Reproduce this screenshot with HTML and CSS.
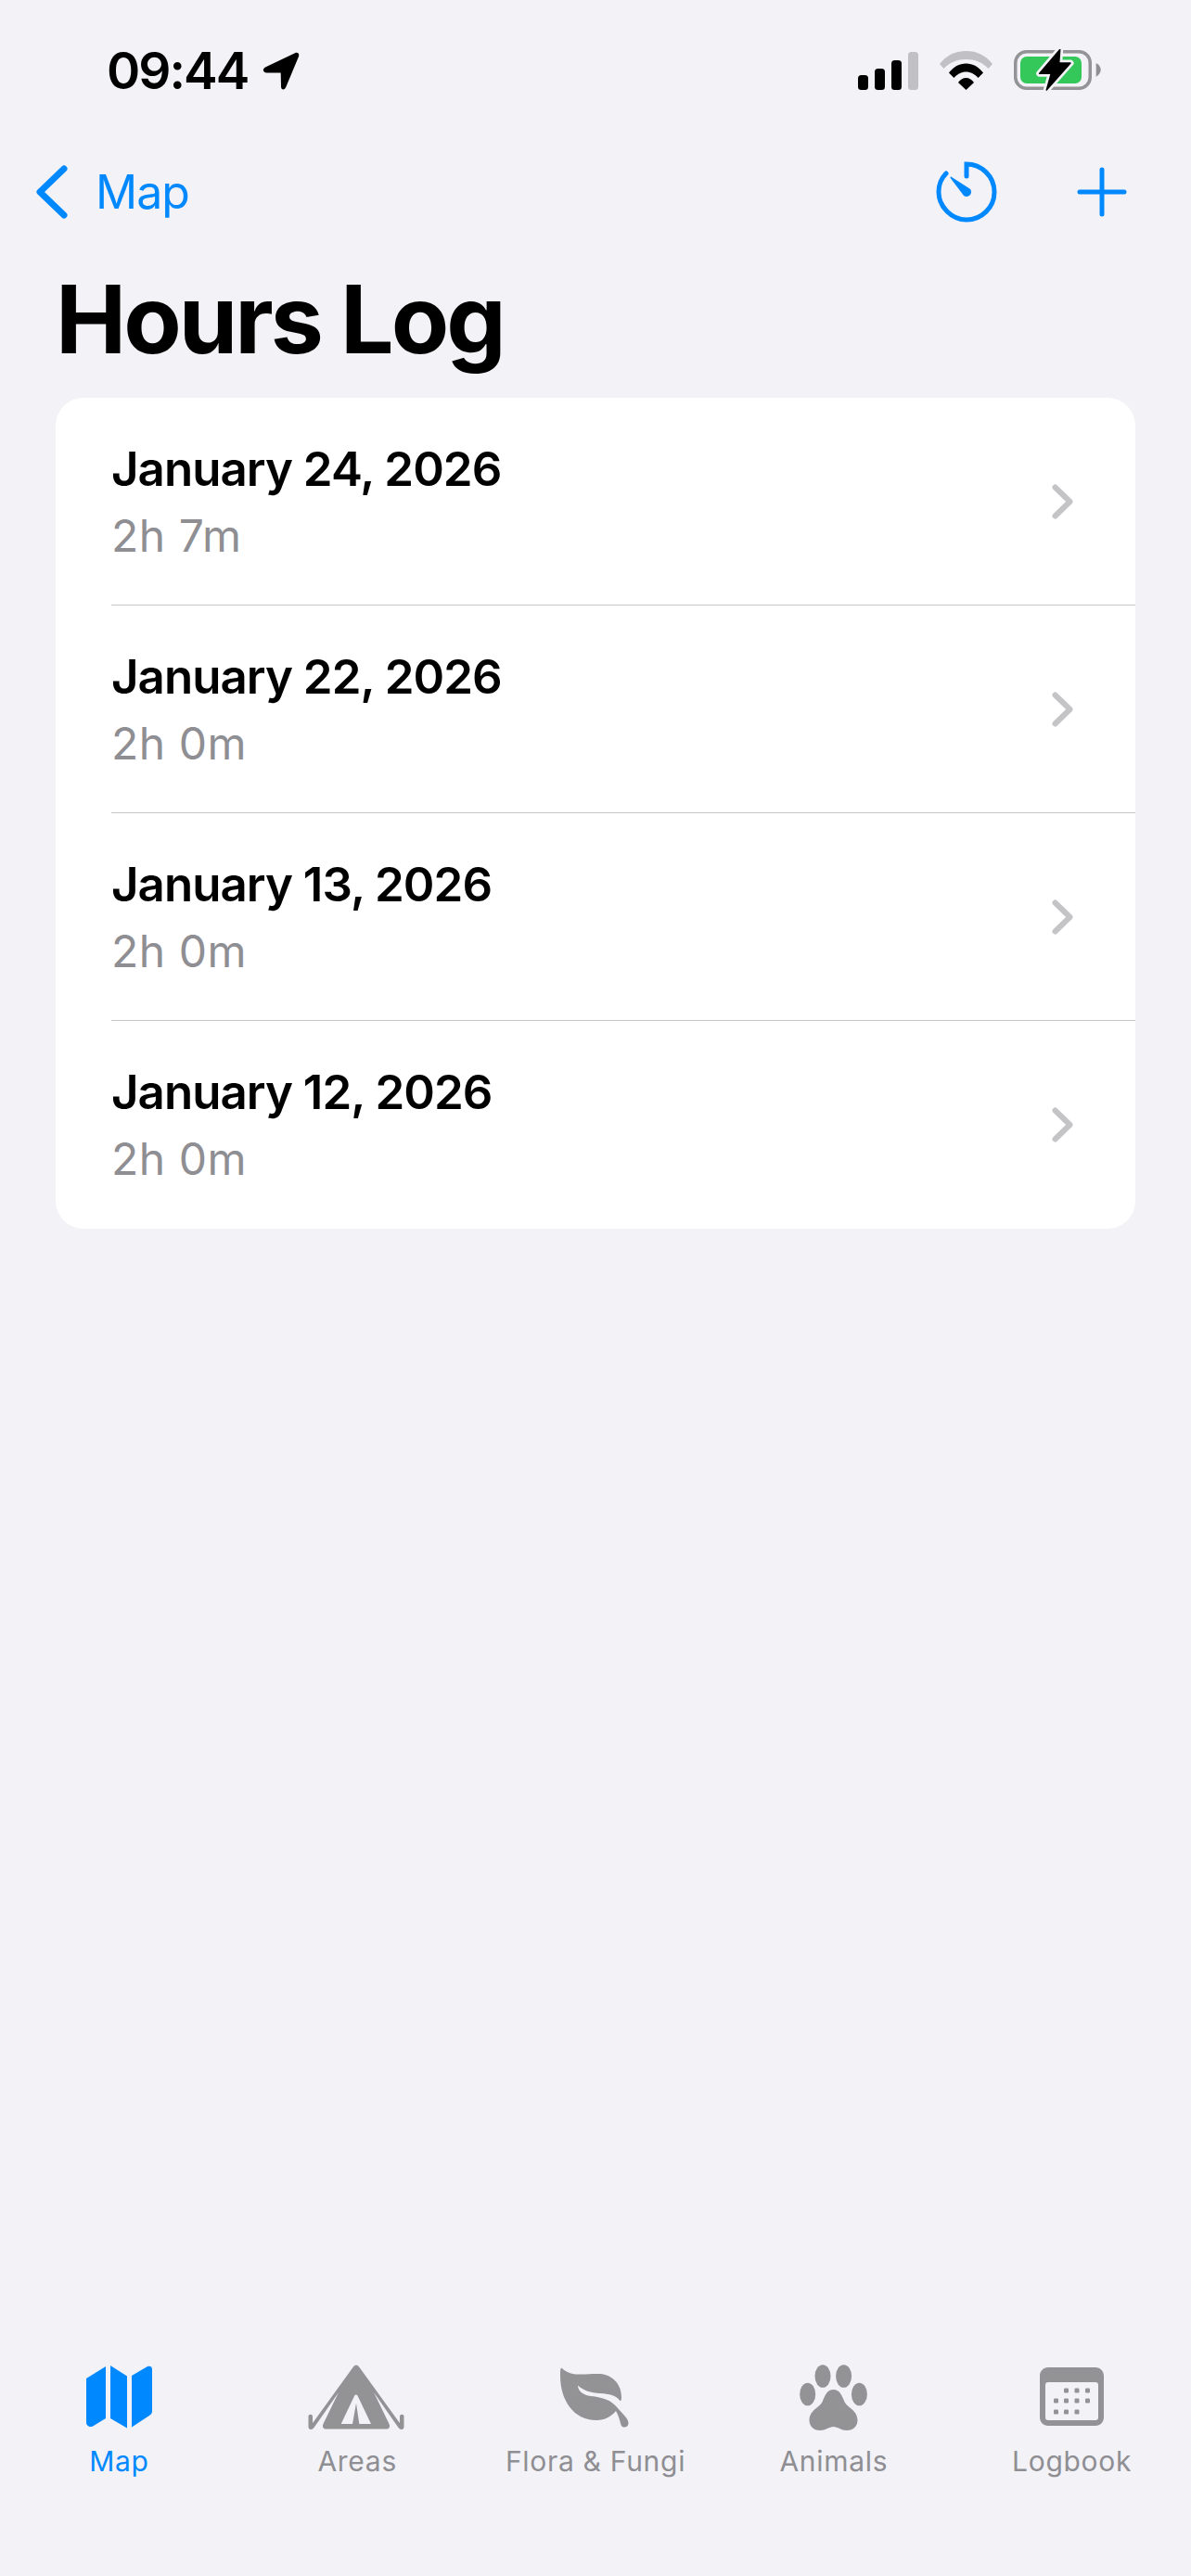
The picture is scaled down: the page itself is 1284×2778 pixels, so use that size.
FILE: index.html
```html
<!DOCTYPE html>
<html lang="en">
<head>
    <meta charset="UTF-8">
    <meta name="viewport" content="width=device-width, initial-scale=1.0">
    <title>Hours Log</title>
    <link rel="stylesheet" href="styles.css">
</head>
<body>
    <!-- Status bar -->
    <div class="status-bar">
        <div class="status-left">
            <span class="time">09:44</span>
            <svg class="location-arrow" viewBox="0 0 40 41"><path d="M3 16.5 35 1.2C38 0 40 2 39 5L25 38.5C23.5 41.5 20 41 20 37.500L19.700 22.500 4.500 22.500C0.500 22.500 -0.500 18.500 3 16.500Z"/></svg>
        </div>
        <div class="status-right">
            <svg class="signal" viewBox="0 0 65 41">
                <rect x="0" y="25" width="11" height="16" rx="3.500"/>
                <rect x="18" y="18" width="11" height="23" rx="3.500"/>
                <rect x="36" y="9" width="11" height="32" rx="3.500"/>
                <rect class="dim" x="54" y="0" width="11" height="41" rx="3.500"/>
            </svg>
            <svg class="wifi" viewBox="0 0 57 42">
                <path class="dim" d="M0 14C7.500 4.500 17 0 28.500 0S49.500 4.500 57 14L52.500 19C46 12 38 9 28.500 9S11 12 4.500 19Z"/>
                <path d="M10 23.500C15 17 21 13.500 28.500 13.500S42 17 47 23.500L41.500 29C38 25 33.500 22.500 28.500 22.500S19 25 15.500 29Z"/>
                <path d="M20 34C22 31 25 29 28.500 29S35 31 37 34L28.500 42Z"/>
            </svg>
            <svg class="battery" viewBox="0 0 94 46">
                <rect class="battery-shell" x="1.750" y="2.750" width="80.500" height="39.500" rx="12"/>
                <path class="battery-nub" d="M88.700 15C91.500 16.500 93.700 19 93.700 22.300S91.500 28 88.700 29.700Z"/>
                <rect class="battery-fill" x="7" y="8" width="66" height="29" rx="7"/>
                <path class="bolt-halo" d="M49.700 0.500 27.700 26.300 40.300 26.300 35.300 44 61 15 48.700 15Z"/>
                <path class="bolt" d="M49.700 0.500 27.700 26.300 40.300 26.300 35.300 44 61 15 48.700 15Z"/>
            </svg>
        </div>
    </div>

    <!-- Nav bar -->
    <div class="nav-bar">
        <a class="back-link">
            <svg class="back-chevron" viewBox="0 0 34 58"><path d="M30 4 4 29 30 54"/></svg>
            <span>Map</span>
        </a>
        <div class="nav-actions">
            <svg class="timer-icon" viewBox="0 0 66 66">
                <path d="M33 16V3C49 3 63 16 63 33S49 63 33 63 3 49 3 33C3 25 6 18 11 13"/>
                <path class="needle" d="M17 17 36.500 29.500C39.500 32 38 37.500 33.500 38 31.500 38.200 29.500 37 28.500 35L16 18.500C15 17 15.800 16 17 17Z"/>
            </svg>
            <svg class="plus-icon" viewBox="0 0 54 54"><path d="M27 3V51M3 27H51"/></svg>
        </div>
    </div>

    <h1 class="page-title">Hours Log</h1>

    <ul class="log-list">
        <li>
            <div class="log-text"><b>January 24, 2026</b><span>2h 7m</span></div>
            <svg class="row-chevron" viewBox="0 0 24 38"><path d="M3.500 3.500 19.500 19 3.500 34.500"/></svg>
        </li>
        <li>
            <div class="log-text"><b>January 22, 2026</b><span>2h 0m</span></div>
            <svg class="row-chevron" viewBox="0 0 24 38"><path d="M3.500 3.500 19.500 19 3.500 34.500"/></svg>
        </li>
        <li>
            <div class="log-text"><b>January 13, 2026</b><span>2h 0m</span></div>
            <svg class="row-chevron" viewBox="0 0 24 38"><path d="M3.500 3.500 19.500 19 3.500 34.500"/></svg>
        </li>
        <li>
            <div class="log-text"><b>January 12, 2026</b><span>2h 0m</span></div>
            <svg class="row-chevron" viewBox="0 0 24 38"><path d="M3.500 3.500 19.500 19 3.500 34.500"/></svg>
        </li>
    </ul>

    <!-- Tab bar -->
    <nav class="tab-bar">
        <a class="tab current-tab">
            <svg viewBox="0 0 110 72">
                <path d="M20 15 41 2V58L27 66.500C24 68 20 66.500 20 62Z"/>
                <path d="M46 1 64 12.500V68.500L46 58Z"/>
                <path d="M69 12 86 2C88.500 1 91 2 91 5V50C91 52 90 54 88 55L69 67.500Z"/>
            </svg>
            <span>Map</span>
        </a>
        <a class="tab">
            <svg viewBox="0 0 110 72">
                <path fill-rule="evenodd" d="M50.500 3C52.500 -0.500 55.500 -0.500 57.500 3L100.500 62.500 101 62.500V56C101 53 105.500 53 105.500 56V67C105.500 70.500 101.500 71 99.500 68L73 30 89.500 64C91 67 89.500 69.500 87 69.500H21C18.500 69.500 17 67 18.500 64L35 30 8.500 68C6.500 71 2.500 70.500 2.500 67V56C2.500 53 7 53 7 56V62.500L7.500 62.500ZM37.700 64H50L54 41.700 57.300 64H70L55.500 33.500C54.700 32 53 32 52.200 33.500Z"/>
            </svg>
            <span>Areas</span>
        </a>
        <a class="tab">
            <svg viewBox="0 0 100 72">
                <path d="M14 4C18 8 24 10.500 31 10.500 40 11 46 9.500 55 10 68 11 78 21 78 35 78 38 77.500 40 76 38.500 72 33.500 65 31.500 55 31 45 30.500 37 28 31 22.500 31 28 36 33 45 34 58 35.500 67 38 74 47 79 53 85.500 58 85.500 63 85.500 68.500 79 69 77.500 65 76 60 75 55 72 50 67 56 60 60 51 60 26 60 12 38 12 12 12 7 12 2.500 14 4Z"/>
            </svg>
            <span>Flora &amp; Fungi</span>
        </a>
        <a class="tab">
            <svg viewBox="0 0 100 72">
                <ellipse cx="38" cy="12.500" rx="8.500" ry="12.300"/>
                <ellipse cx="60.600" cy="12.500" rx="8.500" ry="12.300"/>
                <ellipse cx="21.700" cy="32" rx="8.500" ry="12.300"/>
                <ellipse cx="77.400" cy="32" rx="8.500" ry="12.300"/>
                <path d="M49.500 27C56 27 58 32 61 39 64 47 75 48 75.500 60 75.500 68 69 71 64 71 58 71 54 67 49.500 67 45 67 41 71 35 71 30 71 23.500 68 23.500 60 24 48 35 47 38 39 41 32 43 27 49.500 27Z"/>
            </svg>
            <span>Animals</span>
        </a>
        <a class="tab">
            <svg viewBox="0 0 100 72">
                <path fill-rule="evenodd" d="M24 3H75C80 3 84 7 84 12V57C84 62 80 66 75 66H24C19 66 15 62 15 57V12C15 7 19 3 24 3ZM24 19C22 19 21 20 21 22V57C21 59 22 60 24 60H75C77 60 78 59 78 57V22C78 20 77 19 75 19Z"/>
                <rect x="41" y="25.500" width="5" height="5" rx="1.200"/>
                <rect x="52.500" y="25.500" width="5" height="5" rx="1.200"/>
                <rect x="64" y="25.500" width="5" height="5" rx="1.200"/>
                <rect x="30" y="36.500" width="5" height="5" rx="1.200"/>
                <rect x="41" y="36.500" width="5" height="5" rx="1.200"/>
                <rect x="52.500" y="36.500" width="5" height="5" rx="1.200"/>
                <rect x="64" y="36.500" width="5" height="5" rx="1.200"/>
                <rect x="30" y="48.500" width="5" height="5" rx="1.200"/>
                <rect x="41" y="48.500" width="5" height="5" rx="1.200"/>
                <rect x="52.500" y="48.500" width="5" height="5" rx="1.200"/>
            </svg>
            <span>Logbook</span>
        </a>
    </nav>
</body>
</html>
```
FILE: styles.css
```css
* {
    box-sizing: border-box;
}

body {
    display: flex;
    flex-direction: column;
    height: 2778px;
    margin: 0;
    overflow: hidden;
    background-color: #f2f2f7;
    color: #000;
    font-family: Inter, "Liberation Sans", sans-serif;
}

svg {
    display: block;
    flex: none;
}

/* Status bar */
.status-bar {
    display: flex;
    align-items: center;
    justify-content: space-between;
    height: 152px;
    padding: 0 97px 0 115px;
}

.status-left,
.status-right {
    display: flex;
    align-items: center;
}

.time {
    font-size: 55px;
    font-weight: 600;
    line-height: 66px;
    letter-spacing: -2px;
}

.location-arrow {
    width: 40px;
    height: 41px;
    margin-left: 16px;
}

.status-right .dim {
    fill: #c0c0c5;
}

.signal {
    width: 65px;
    height: 41px;
}

.wifi {
    width: 57px;
    height: 42px;
    margin-left: 23px;
}

.battery {
    width: 94px;
    height: 46px;
    margin-left: 23px;
}

.battery-shell {
    fill: none;
    stroke: #949497;
    stroke-width: 3.500px;
}

.battery-nub {
    fill: #8e8e93;
}

.battery-fill {
    fill: #34c759;
}

.bolt-halo {
    fill: #f2f2f7;
    stroke: #f2f2f7;
    stroke-width: 7px;
    stroke-linejoin: round;
}

.bolt {
    stroke: #000;
    stroke-width: 1.500px;
    stroke-linejoin: round;
}

/* Nav bar */
.nav-bar {
    display: flex;
    align-items: center;
    justify-content: space-between;
    height: 110px;
    padding: 0 69px 0 39px;
    color: #0088ff;
}

.back-link {
    display: flex;
    align-items: center;
    gap: 30px;
    font-size: 50px;
    line-height: 60px;
    letter-spacing: -1px;
}

.back-chevron {
    width: 34px;
    height: 58px;
    fill: none;
    stroke: #0088ff;
    stroke-width: 7px;
    stroke-linecap: round;
    stroke-linejoin: round;
}

.nav-actions {
    display: flex;
    align-items: center;
    gap: 86px;
}

.timer-icon {
    width: 66px;
    height: 66px;
    fill: none;
    stroke: #0088ff;
    stroke-width: 5px;
    stroke-linecap: round;
}

.timer-icon .needle {
    fill: #0088ff;
    stroke: none;
}

.plus-icon {
    width: 54px;
    height: 54px;
    fill: none;
    stroke: #0088ff;
    stroke-width: 5px;
    stroke-linecap: round;
}

.page-title {
    height: 167px;
    margin: 0;
    padding: 20px 0 0 60px;
    font-size: 102px;
    font-weight: 700;
    line-height: 124px;
    letter-spacing: -3px;
}

/* Log list */
.log-list {
    margin: 0 60px;
    padding: 0;
    overflow: hidden;
    list-style: none;
    background-color: #fff;
    border-radius: 30px;
}

.log-list li {
    display: flex;
    align-items: center;
    justify-content: space-between;
    height: 224px;
    margin-left: 60px;
    padding-right: 66px;
    border-bottom: 1px solid #c6c6c8;
}

.log-list li:last-child {
    border-bottom: none;
}

.log-text {
    display: flex;
    flex-direction: column;
    padding-bottom: 2px;
}

.log-text b {
    font-size: 51px;
    font-weight: 600;
    line-height: 62px;
    letter-spacing: -0.950px;
}

.log-text span {
    margin-top: 14px;
    font-size: 48px;
    line-height: 54px;
    letter-spacing: 0.500px;
    color: #8e8e93;
}

.row-chevron {
    width: 24px;
    height: 38px;
    fill: none;
    stroke: #c4c4c7;
    stroke-width: 6px;
    stroke-linecap: round;
    stroke-linejoin: round;
}

/* Tab bar */
.tab-bar {
    display: grid;
    grid-template-columns: repeat(5, 1fr);
    margin-top: auto;
    height: 228px;
}

.tab {
    display: flex;
    flex-direction: column;
    align-items: center;
    gap: 14px;
    font-size: 30px;
    line-height: 36px;
    letter-spacing: 0.700px;
    color: #8e8e93;
    fill: #939396;
}

.tab svg {
    height: 72px;
}

.tab svg[viewBox^="0 0 110"] {
    width: 110px;
}

.tab svg[viewBox^="0 0 100"] {
    width: 100px;
}

.current-tab {
    color: #0088ff;
    fill: #0088ff;
}
```
